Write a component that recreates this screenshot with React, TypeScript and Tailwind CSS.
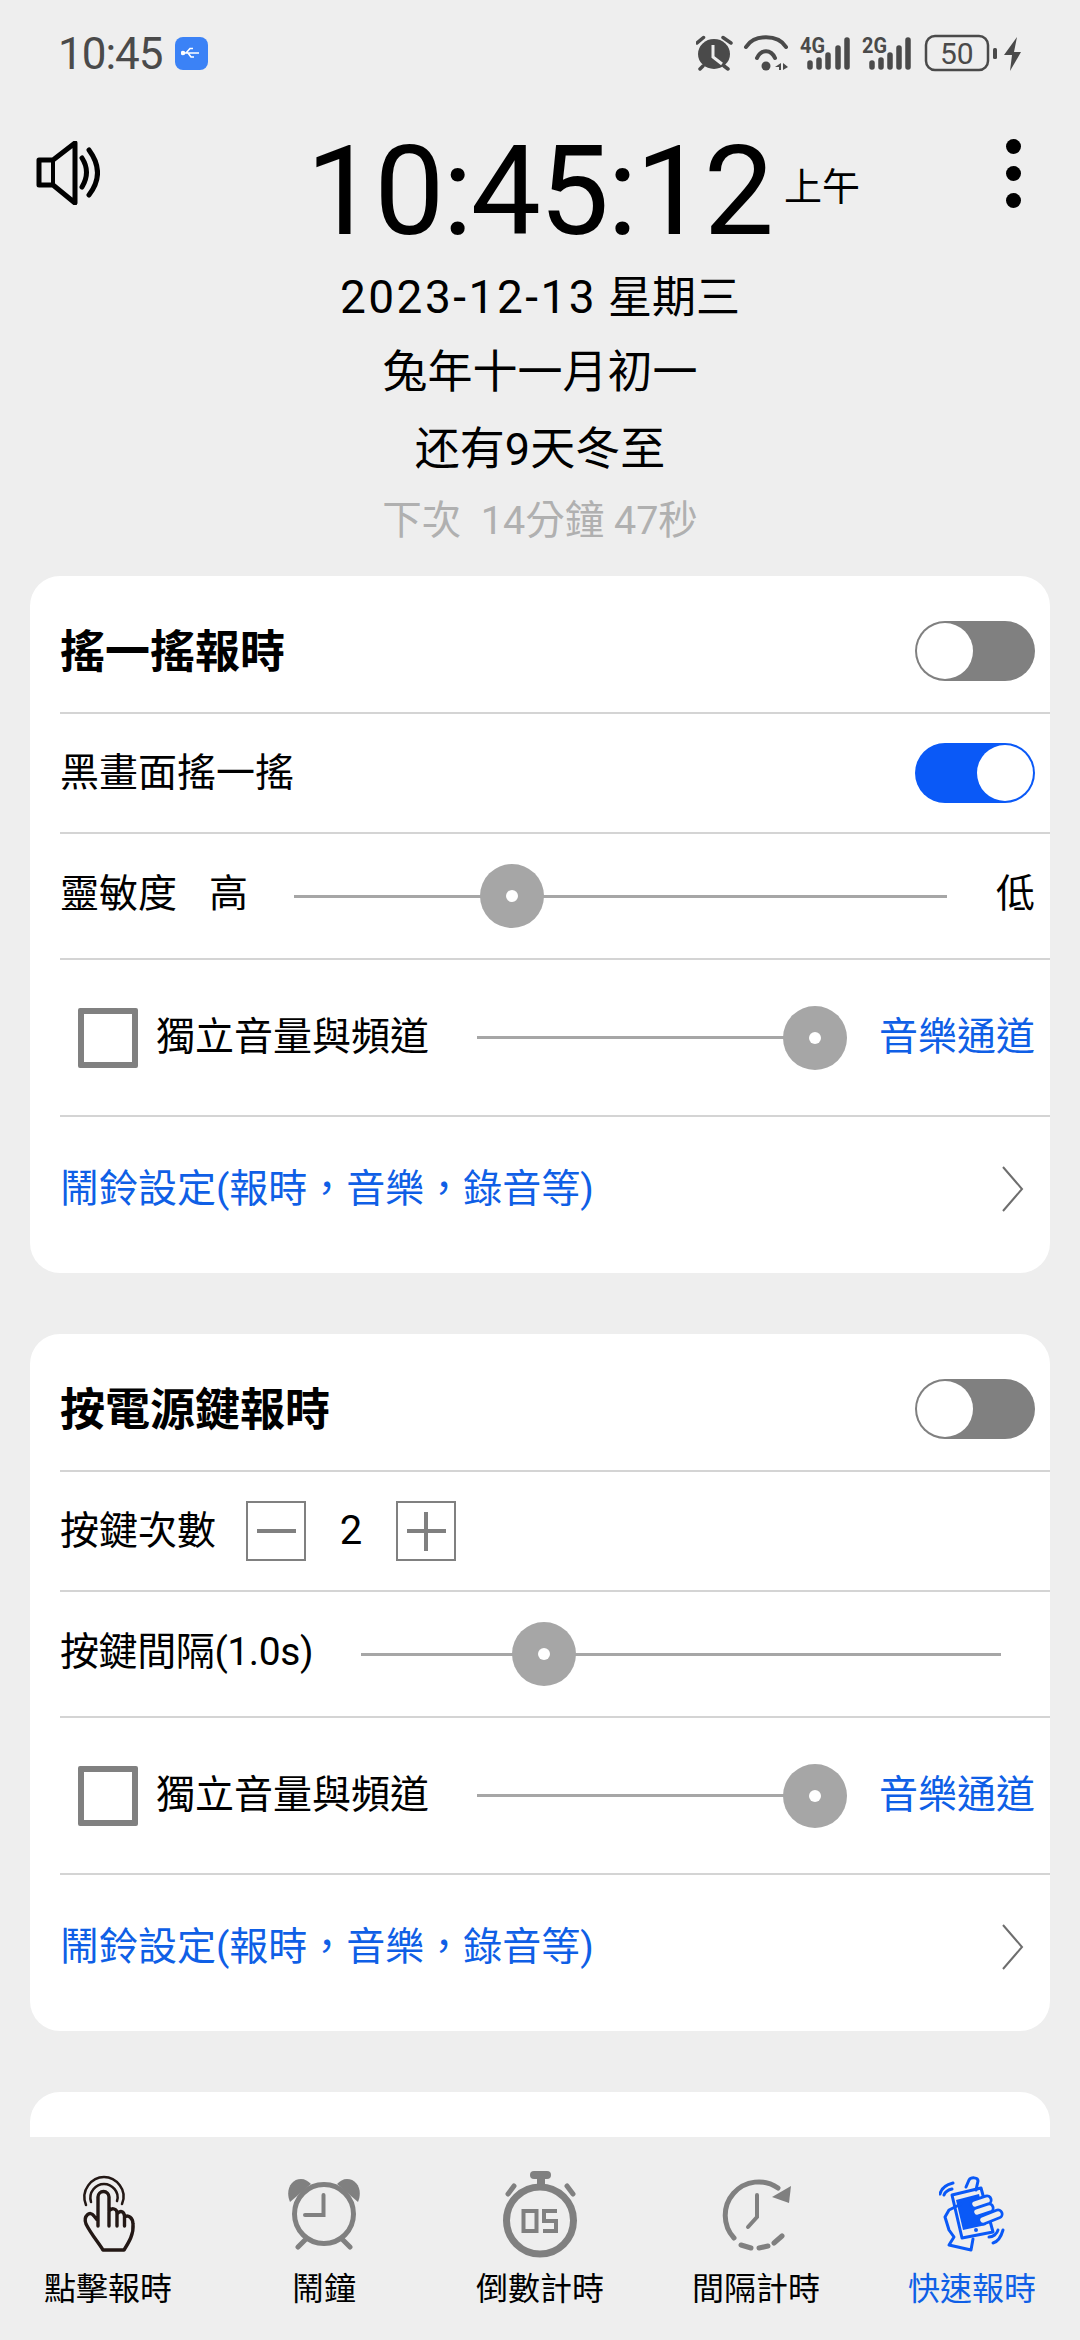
import { ReactNode } from "react";

const CJK = "font-['Roboto','Noto_Sans_CJK_TC',sans-serif]";
const BLUE = "text-[#0f5fe6]";

function Toggle({ on }: { on?: boolean }) {
  return (
    <div
      className={`flex h-[60px] w-[120px] items-center rounded-full p-[2px] ${
        on ? "justify-end bg-[#0a59f7]" : "justify-start bg-[#808080]"
      }`}
    >
      <div className="h-[56px] w-[56px] rounded-full bg-white" />
    </div>
  );
}

function Slider({ className, percent }: { className: string; percent: number }) {
  return (
    <div className={`relative h-[3px] bg-[#a6a6a6] ${className}`}>
      <div
        className="absolute top-1/2 flex h-[64px] w-[64px] -translate-x-1/2 -translate-y-1/2 items-center justify-center rounded-full bg-[#a6a6a6]"
        style={{ left: `${percent}%` }}
      >
        <div className="h-[12px] w-[12px] rounded-full bg-white" />
      </div>
    </div>
  );
}

function Row({ height, children, border = true }: { height: string; children: ReactNode; border?: boolean }) {
  return (
    <div className={`ml-[30px] flex items-center ${height} ${border ? "border-b-2 border-[#d4d4d4]" : ""}`}>
      {children}
    </div>
  );
}

function ChannelRow() {
  return (
    <Row height="h-[157px]">
      <div className="ml-[18px] h-[60px] w-[60px] rounded-[2px] border-[6px] border-[#808080]" />
      <span className="ml-[18px] text-[39px] text-black">獨立音量與頻道</span>
      <Slider className="ml-[48px] w-[338px]" percent={100} />
      <span className={`ml-[64px] text-[39px] ${BLUE}`}>音樂通道</span>
    </Row>
  );
}

function AlarmRow() {
  return (
    <Row height="h-[156px] pb-[12px]" border={false}>
      <span className={`text-[39px] ${BLUE}`}>鬧鈴設定(報時，音樂，錄音等)</span>
      <svg className="ml-auto mr-[26px]" width="22" height="46" viewBox="0 0 22 46" fill="none" stroke="#6e6e6e" strokeWidth="2">
        <path d="M1 1 L20 23 L1 45" />
      </svg>
    </Row>
  );
}

function StatusBar() {
  return (
    <div className="flex h-[110px] items-center justify-between pb-[4px] pl-[58px] pr-[58px] text-[#4a4a4a]">
      <div className="flex items-center gap-[12px]">
        <span className="mt-[2px] text-[44px] leading-none tracking-[-1px]">10:45</span>
        <div className="flex h-[33px] w-[33px] items-center justify-center rounded-[8px] bg-[#3b82f6]">
          <svg width="20" height="14" viewBox="0 0 20 14" fill="none" stroke="white" strokeWidth="1.6">
            <path d="M1 7H18M5 7L9 2.5H12M7 7L10 11H13" />
            <circle cx="2" cy="7" r="1.5" fill="white" />
          </svg>
        </div>
      </div>
      <svg width="326" height="38" viewBox="0 0 326 38" fill="#4a4a4a">
        {/* alarm */}
        <ellipse cx="18" cy="20" rx="16" ry="15" />
        <path d="M1 9L7.5 3.5M27 3.5L35 9M4 35L7 32M32 35L28 32" stroke="#4a4a4a" strokeWidth="3.5" strokeLinecap="round" />
        <path d="M17 11V23L26 30" stroke="#eeeeee" strokeWidth="3" fill="none" />
        {/* wifi */}
        <g fill="none" stroke="#4a4a4a" strokeWidth="4" strokeLinecap="round">
          <path d="M50 13C58 0 82 0 90 13" />
          <path d="M61 24C65 15 75 15 79 24" />
        </g>
        <circle cx="70" cy="32" r="4.5" />
        <path d="M79 33L85 29V36H83V33ZM87 29L92 33L87 36Z" />
        {/* 4G */}
        <text x="104" y="19" fontSize="22" fontWeight="700" fontFamily="Roboto" textLength="25" lengthAdjust="spacingAndGlyphs">4G</text>
        <g stroke="#4a4a4a" strokeWidth="5.5" strokeLinecap="round">
          <path d="M114 29V33M123 26V33M132 21V33M142 14V33M151 6V33" />
        </g>
        {/* 2G */}
        <text x="166" y="19" fontSize="22" fontWeight="700" fontFamily="Roboto" textLength="25" lengthAdjust="spacingAndGlyphs">2G</text>
        <g stroke="#4a4a4a" strokeWidth="5.5" strokeLinecap="round">
          <path d="M176 29V33M185 26V33M194 21V33M203 14V33M212 6V33" />
        </g>
        {/* battery */}
        <rect x="230" y="2" width="62" height="34" rx="9" fill="none" stroke="#4a4a4a" strokeWidth="2.5" />
        <text x="244" y="30" fontSize="30" fontFamily="Roboto">50</text>
        <rect x="297" y="14" width="4" height="11" rx="1.5" />
        <path d="M321 3L308 21H316L314 37L325 18H318Z" />
      </svg>
    </div>
  );
}

function ClockHeader() {
  return (
    <div className="relative h-[466px]">
      <svg className="absolute left-[36px] top-[31px]" width="64" height="64" viewBox="0 0 64 64" fill="none" stroke="black" strokeWidth="5">
        <path d="M17 19H3V44H17L39 62V2Z" strokeLinejoin="round" />
        <path d="M17 19V44" strokeWidth="4" />
        <path d="M46 17Q55 31 46 46M53 9Q70 32 53 54" strokeLinecap="round" />
      </svg>
      <div className="absolute right-[59px] top-[29px] flex flex-col gap-[12px]">
        <div className="h-[15px] w-[15px] rounded-full bg-black" />
        <div className="h-[15px] w-[15px] rounded-full bg-black" />
        <div className="h-[15px] w-[15px] rounded-full bg-black" />
      </div>
      <div className="flex flex-col items-center text-black">
        <div className="relative ml-[-2px] mt-[19px] h-[126px] text-[125px] leading-[126px] tracking-[-2px]">
          10:45:12
          <span className="absolute left-[100%] top-[33px] ml-[12px] whitespace-nowrap text-[38px] leading-[50px] tracking-normal">上午</span>
        </div>
        <div className="mt-[12px] text-[44px] leading-[60px]">
          <span className="text-[46px] tracking-[2.5px]">2023-12-13</span> 星期三
        </div>
        <div className="mt-[15px] text-[45px] leading-[60px]">兔年十一月初一</div>
        <div className="mt-[17px] text-[45px] leading-[60px]">还有9天冬至</div>
        <div className="mt-[16px] whitespace-pre text-[39.5px] leading-[50px] text-[#b0b0b0]">下次  14分鐘 47秒</div>
      </div>
    </div>
  );
}

function ShakeCard() {
  return (
    <section className="overflow-hidden rounded-[30px] bg-white">
      <Row height="h-[138px] pt-[14px]">
        <span className="mt-[3px] text-[45px] font-bold text-black">搖一搖報時</span>
        <div className="ml-auto mr-[15px]">
          <Toggle />
        </div>
      </Row>
      <Row height="h-[120px]">
        <span className="text-[39px] text-black">黑畫面搖一搖</span>
        <div className="ml-auto mr-[15px]">
          <Toggle on />
        </div>
      </Row>
      <Row height="h-[126px]">
        <span className="mb-[4px] text-[39px] text-black">靈敏度</span>
        <span className="mb-[4px] ml-[32px] text-[39px] text-black">高</span>
        <Slider className="ml-[46px] w-[653px]" percent={33.4} />
        <span className="mb-[4px] ml-auto mr-[15px] text-[39px] text-black">低</span>
      </Row>
      <ChannelRow />
      <AlarmRow />
    </section>
  );
}

function PowerCard() {
  return (
    <section className="mt-[61px] overflow-hidden rounded-[30px] bg-white">
      <Row height="h-[138px] pt-[14px]">
        <span className="mt-[3px] text-[45px] font-bold text-black">按電源鍵報時</span>
        <div className="ml-auto mr-[15px]">
          <Toggle />
        </div>
      </Row>
      <Row height="h-[120px]">
        <span className="text-[39px] text-black">按鍵次數</span>
        <div className="ml-[30px] flex h-[60px] w-[60px] items-center justify-center border-2 border-[#808080]">
          <div className="h-[4px] w-[39px] bg-[#808080]" />
        </div>
        <span className="w-[90px] text-center text-[40px] text-black">2</span>
        <div className="relative flex h-[60px] w-[60px] items-center justify-center border-2 border-[#808080]">
          <div className="h-[4px] w-[39px] bg-[#808080]" />
          <div className="absolute h-[39px] w-[4px] bg-[#808080]" />
        </div>
      </Row>
      <Row height="h-[126px]">
        <span className="mb-[4px] text-[39px] tracking-[-0.4px] text-black">按鍵間隔(1.0s)</span>
        <Slider className="ml-[48px] w-[640px]" percent={28.6} />
      </Row>
      <ChannelRow />
      <AlarmRow />
    </section>
  );
}

function NavItem({ label, active, children }: { label: string; active?: boolean; children: ReactNode }) {
  return (
    <div className="flex flex-1 flex-col items-center">
      <div className="flex h-[90px] w-[90px] items-center justify-center">{children}</div>
      <span className={`mt-[8px] text-[32px] leading-[44px] ${active ? BLUE : "text-black"}`}>{label}</span>
    </div>
  );
}

function BottomNav() {
  return (
    <nav className="flex h-[203px] shrink-0 bg-[#eeeeee] pt-[32px]">
      <NavItem label="點擊報時">
        <svg width="56" height="80" viewBox="0 0 56 80" fill="none" stroke="#231815" strokeLinecap="round" strokeLinejoin="round">
          <path d="M6 31C0 16 12 3 24 3C36 3 48 16 42 30" strokeWidth="2.5" />
          <path d="M11 28C8 18 16 10 24 10C32 10 40 18 37 27" strokeWidth="2.5" />
          <path
            d="M18 52V23A5.5 5.5 0 0 1 29 23V52M29 37C32 33 37 35 37 39V52M37 40C40 36 44 37 44.5 42V52M44.5 43C48 40 53 44 53 50C54 60 49 68 44 76H23C18 68 11 60 6 50C3 42 10 36 14 42L18 47"
            strokeWidth="3.4"
          />
        </svg>
      </NavItem>
      <NavItem label="鬧鐘">
        <svg width="74" height="72" viewBox="0 0 74 72" fill="none" stroke="#808080">
          <circle cx="37" cy="36" r="29.5" strokeWidth="5" />
          <path d="M36.5 17V37H18" strokeWidth="4" strokeLinecap="round" />
          <path d="M11 69L18 62M63 69L56 62" strokeWidth="5" strokeLinecap="round" />
          <path d="M3 24C-2 12 4 1 14 1C18 1 21 3 24 6Z" fill="#808080" stroke="none" />
          <path d="M71 24C76 12 70 1 60 1C56 1 53 3 50 6Z" fill="#808080" stroke="none" />
        </svg>
      </NavItem>
      <NavItem label="倒數計時">
        <svg width="80" height="92" viewBox="0 0 80 92" fill="none" stroke="#808080">
          <circle cx="40" cy="52.5" r="33.5" strokeWidth="7" />
          <path d="M34 7H47" strokeWidth="8" strokeLinecap="round" />
          <path d="M41 7V16" strokeWidth="8" />
          <path d="M8 26L14 18M67 18L73 26" strokeWidth="5" strokeLinecap="round" />
          <rect x="23.5" y="43" width="13" height="20" strokeWidth="4" />
          <path d="M57 43H44V53H56V63H43" strokeWidth="4" />
        </svg>
      </NavItem>
      <NavItem label="間隔計時">
        <svg width="76" height="76" viewBox="0 0 76 76" fill="none" stroke="#808080" strokeWidth="5" strokeLinecap="round">
          <path d="M60 12A33.5 33.5 0 0 0 16 62" />
          <path d="M23 69L33 72M41 72L50 70M56 67L64 60" />
          <path d="M39 19V41L30 51" strokeWidth="4" />
          <path d="M73 10L54 21L71 27Z" fill="#808080" stroke="none" />
        </svg>
      </NavItem>
      <NavItem label="快速報時" active>
        <svg width="66" height="76" viewBox="0 0 66 76" fill="none" stroke="#0a59f7" strokeWidth="3" strokeLinecap="round" strokeLinejoin="round">
          <path d="M1 18C2 13 6 9 14 7M5 19C6 16 9 14 13 13" />
          <path d="M50 61C54 61 58 58 59 54M54 67C58 66 62 61 64 54" />
          <path d="M27 11L30 4C32 1 39 1 39 5L37 14" />
          <path d="M13 19L42 12L54 56L23 62Z" />
          <path d="M17 24L40 18L47 49L24 54Z" fill="#0a59f7" stroke="none" />
          <circle cx="37" cy="54" r="2" fill="#0a59f7" stroke="none" />
          <path d="M22 28L10 34L6 41L10 54L15 61L10 69L32 74L34 63" />
          <g strokeWidth="11">
            <path d="M36 28L48 24M38 36L50 32M44 44L59 38" />
          </g>
          <g stroke="#eeeeee" strokeWidth="5.5">
            <path d="M36 28L48 24M38 36L50 32M44 44L59 38" />
          </g>
        </svg>
      </NavItem>
    </nav>
  );
}

export default function App() {
  return (
    <div className={`flex h-[2340px] w-[1080px] flex-col overflow-hidden bg-[#eeeeee] ${CJK}`}>
      <StatusBar />
      <ClockHeader />
      <main className="min-h-0 flex-1 overflow-hidden px-[30px] pb-0">
        <ShakeCard />
        <PowerCard />
        <section className="mt-[61px] h-[200px] rounded-[30px] bg-white" />
      </main>
      <BottomNav />
    </div>
  );
}
